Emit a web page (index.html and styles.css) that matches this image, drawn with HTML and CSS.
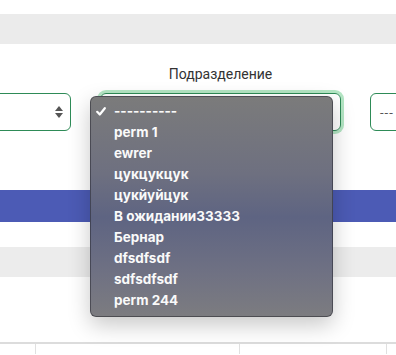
FILE: index.html
```html
<!DOCTYPE html>
<html lang="ru">
<head>
    <meta charset="UTF-8">
    <meta name="viewport" content="width=device-width, initial-scale=1.0">
    <title>Фильтры</title>
    <link rel="stylesheet" href="styles.css">
</head>
<body>
    <div class="page">
        <div class="toolbar"></div>

        <div class="filters">
            <div class="filter">
                <label class="filter-label">&nbsp;</label>
                <div class="select"><span class="arrows"><i class="up"></i><i class="down"></i></span></div>
            </div>
            <div class="filter">
                <label class="filter-label">Подразделение</label>
                <div class="select focused"><span class="arrows"><i class="up"></i><i class="down"></i></span></div>
            </div>
            <div class="filter">
                <label class="filter-label">&nbsp;</label>
                <div class="select"><span class="value">---</span></div>
            </div>
        </div>

        <div class="action-bar"></div>
        <div class="table-head"></div>

        <div class="table">
            <div class="cell c1"></div>
            <div class="cell c2"></div>
            <div class="cell c3"></div>
            <div class="cell c4"></div>
        </div>

        <!-- native select popup, open -->
        <ul class="popup">
            <li class="checked">
                <svg class="check" width="10" height="9" viewBox="0 0 10 9"><path d="M1.2 4.8 L3.8 7.5 L8.8 1.2" fill="none" stroke="#fff" stroke-width="2.2" stroke-linecap="round" stroke-linejoin="round"/></svg>
                ----------
            </li>
            <li>perm 1</li>
            <li>ewrer</li>
            <li>цукцукцук</li>
            <li>цукйуйцук</li>
            <li>В ожидании33333</li>
            <li>Бернар</li>
            <li>dfsdfsdf</li>
            <li>sdfsdfsdf</li>
            <li>perm 244</li>
        </ul>
    </div>
</body>
</html>
```

FILE: styles.css
```css
* { margin: 0; padding: 0; box-sizing: border-box; }
body {
    font-family: Roboto, 'Noto Sans', sans-serif;
    background: white; overflow: hidden;
}
.page { position: relative; width: 396px; height: 355px; overflow: hidden; padding-top: 14px; }
.toolbar { height: 30px; background: #ebebeb; }

.filters { display: flex; gap: 29px; margin-left: -170px; margin-top: 22px; }
.filter { width: 241px; flex: none; display: flex; flex-direction: column; align-items: center; }
.filter-label { font-size: 14px; color: #333; line-height: 16px; margin-bottom: 11px; }
.select {
    width: 100%; height: 38px; border: 1px solid #2e8b57; border-radius: 6px;
    position: relative; display: flex; align-items: center; padding: 0 9px;
}
.select.focused { box-shadow: 0 0 0 3px #b4e6c4; }
.value { color: #555; font-size: 13px; letter-spacing: 1px; }
.arrows {
    position: absolute; right: 7px; top: 50%; transform: translateY(-50%);
    display: flex; flex-direction: column; gap: 2px;
}
.arrows i { display: block; width: 0; height: 0; border-left: 4px solid transparent; border-right: 4px solid transparent; }
.arrows .up { border-bottom: 5px solid #555; }
.arrows .down { border-top: 5px solid #555; }

.action-bar { height: 32px; background: #4c5bb5; margin-top: 59px; }
.table-head { height: 30px; background: #ececec; margin-top: 25px; }

.table { display: flex; margin-top: 65px; border-top: 2px solid #dcdcdc; height: 12px; }
.cell { border-left: 1px solid #e0e0e0; }
.c1 { width: 35px; border-left: none; }
.c2 { width: 204px; }
.c3 { width: 147px; }
.c4 { flex: 1; }

.popup {
    position: absolute; left: 90px; top: 96px; width: 243px; height: 221px;
    list-style: none; padding: 4px 0 0 23px; border-radius: 6px;
    border: 1px solid rgba(40, 40, 50, 0.55);
    background: linear-gradient(180deg, #7b7b7b 0%, #6e7080 35%, #5e6482 55%, #6f7183 80%, #7c7c80 100%);
    box-shadow: 0 8px 22px rgba(0, 0, 0, 0.22);
    font-family: Inter, 'Noto Sans', sans-serif; font-weight: 700; font-size: 13.5px;
    color: #fafafa; line-height: 21px;
}
.popup li { position: relative; }
.check { position: absolute; left: -18px; top: 6px; }
```
